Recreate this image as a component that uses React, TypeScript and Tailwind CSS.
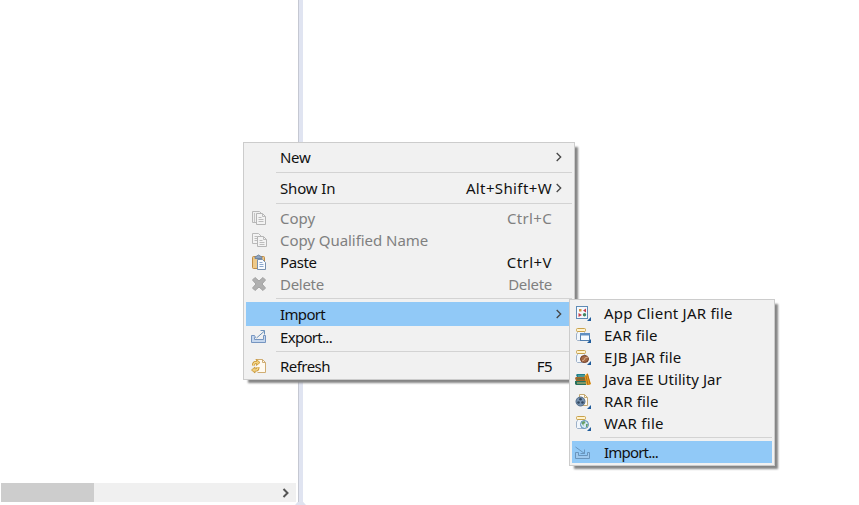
import type { ReactNode } from 'react';

function Svg({ children }: { children: ReactNode }) {
  return (
    <svg width="16" height="16" viewBox="0 0 16 16" fill="none">
      {children}
    </svg>
  );
}

const Corner = () => <path d="M16 12v4h-4z" fill="#1f5c9c" />;

const Jar = () => (
  <>
    <path d="M2.500 4.500v1L1.500 7v5.500l1 1h7l1-1V7l-1-1.500v-1z" fill="#f1f6fb" stroke="#9db1c9" />
    <rect x="1.500" y="1.500" width="9" height="3" rx="1" fill="#fff3cf" stroke="#c9a24c" />
  </>
);

const CopyIcon = () => (
  <Svg>
    <path d="M1.500 1.500h7l2 2v9h-9z" fill="#efefef" stroke="#b8b8b8" />
    <path d="M3.500 3v9" stroke="#c4c4c4" />
    <path d="M5.500 3.500h6l3 3v8h-9z" fill="#f3f3f3" stroke="#b5b5b5" />
    <path d="M11.500 3.500v3h3M7.500 7.500h3M7.500 9.500h5M7.500 11.500h5" stroke="#bcbcbc" />
  </Svg>
);

const CopyNameIcon = () => (
  <Svg>
    <path d="M1.500 1.500h6l3 3v7h-9z" fill="#f3f3f3" stroke="#b9b9b9" />
    <path d="M3.500 4.500h3M3.500 6.500h3M3.500 8.500h3" stroke="#bdbdbd" />
    <path d="M6.500 4.500h6l3 3v7h-9z" fill="#f3f3f3" stroke="#b5b5b5" />
    <path d="M12.500 4.500v3h3M8.500 8.500h3M8.500 10.500h5M8.500 12.500h5" stroke="#bcbcbc" />
  </Svg>
);

const PasteIcon = () => (
  <Svg>
    <rect x="1.500" y="2.500" width="12" height="12" rx="1" fill="#edc98a" stroke="#c18c43" />
    <path d="M4 4.500V3l2-1q1.500-2 3 0l2 1v1.500z" fill="#8fa4c0" stroke="#71869f" />
    <path d="M6.500 5.500h5l3 3v7h-8z" fill="#f8fbff" stroke="#7790ae" />
    <path d="M8.500 8.500h3M8.500 10.500h4M8.500 12.500h4" stroke="#8ca8ce" />
  </Svg>
);

const DeleteIcon = () => (
  <Svg>
    <path d="M4 1.500 8 5l4-3.500L14.500 4 11 8l3.500 4-2.500 2.500L8 11l-4 3.500L1.500 12 5 8 1.500 4z" fill="#b0b0b0" stroke="#a3a3a3" strokeLinejoin="round" />
  </Svg>
);

const ExportIcon = () => (
  <Svg>
    <path d="M3.500 6.500h-3v7h14v-7h-2v4h-9v-2h1z" fill="#c5d7ee" stroke="#7695c0" />
    <path d="M5.500 9l8-7M9.500 1.500h4v4" stroke="#6d91ba" />
  </Svg>
);

const ImportIcon = () => (
  <Svg>
    <path d="M3.500 8.500h-3v6h14v-6h-2v3h-9z" fill="#9fc9ee" stroke="#6995bd" />
    <path d="M.5 3l9 6.500M9.500 5.500v4h-4" stroke="#6995bd" />
  </Svg>
);

const RefreshIcon = () => (
  <Svg>
    <path d="M4.500 1.500h7l3 3v10h-8" fill="#fffaf0" stroke="#d0ad72" />
    <path d="M11.500 1.500v3h3" stroke="#d0ad72" />
    <path d="M6 4.500H4.500Q2.500 4.500 2.500 7.500M3 12h2q2 0 2-3" stroke="#c79331" strokeWidth="3" />
    <path d="M5.500 1.500v6l3.500-3zM4 9v6L.5 12z" fill="#f0cd79" stroke="#c79331" strokeWidth=".8" />
    <path d="M6 4.500H4.500Q2.500 4.500 2.500 7.500M3 12h2q2 0 2-3" stroke="#f5d98e" strokeWidth="1.300" />
  </Svg>
);

const AppClientIcon = () => (
  <Svg>
    <rect x="1.500" y="1.500" width="11" height="12" fill="#f5f9fd" stroke="#5f8bb5" />
    <path d="M4 4h2.500v2.500H4z" fill="#d49442" />
    <path d="M11 3.500v4l-3-2z" fill="#c63f4b" />
    <path d="M3.500 8l3.500 2-3.500 2z" fill="#c63f4b" />
    <circle cx="9.500" cy="9.800" r="1.700" fill="#438665" />
    <Corner />
  </Svg>
);

const EarIcon = () => (
  <Svg>
    <Jar />
    <rect x="5.500" y="6.500" width="9" height="7" fill="#f5faff" stroke="#527faf" />
    <path d="M5 6h10v2.500H5z" fill="#5f8fc2" />
    <Corner />
  </Svg>
);

const EjbIcon = () => (
  <Svg>
    <Jar />
    <ellipse cx="9.500" cy="10" rx="4" ry="3.500" fill="#a56a45" stroke="#713d27" />
    <path d="M7 12q2 0 2.500-2T13 8" stroke="#dfb698" />
    <Corner />
  </Svg>
);

const UtilityIcon = () => (
  <Svg>
    <path d="M1 4l1-1h8v3H2z" fill="#207e8a" />
    <path d="M3 5h7" stroke="#6bb6a6" />
    <path d="M0 7l1-1h10v4H1z" fill="#a9672b" />
    <path d="M2 8h8" stroke="#4d7840" />
    <path d="M0 10h11v4H1l-1-1z" fill="#26715d" />
    <path d="M2 12h9" stroke="#d9be72" />
    <path d="M9.500 5l3-3 3.500 11-1.500 1h-3z" fill="#e79e22" />
    <path d="M11 5l2 9M12.500 3l2.500 10" stroke="#b66d16" />
  </Svg>
);

const RarIcon = () => (
  <Svg>
    <path d="M4.500 1.500h5l3 3v8h-8z" fill="#fffaf0" stroke="#c5aa73" />
    <path d="M9.500 1.500v3h3" stroke="#c5aa73" />
    <circle cx="5.500" cy="8.500" r="4.500" fill="#7893b0" stroke="#506b8a" />
    <circle cx="5.500" cy="6.200" r="1.300" fill="#32475f" />
    <circle cx="3.500" cy="9.500" r="1.300" fill="#32475f" />
    <circle cx="7.500" cy="9.500" r="1.300" fill="#32475f" />
    <Corner />
  </Svg>
);

const WarIcon = () => (
  <Svg>
    <Jar />
    <circle cx="9.500" cy="9.500" r="4" fill="#d5e9f5" stroke="#568ab5" />
    <path d="M6.500 8q1-2 3-2l1 2-2 1v2zM11 9h2l-1 3h-1z" fill="#67a064" />
    <Corner />
  </Svg>
);

type ItemProps = {
  label: string;
  icon?: ReactNode;
  shortcut?: string;
  arrow?: boolean;
  className?: string;
  text?: string;
  keys?: string;
};

function Item({ label, icon, shortcut, arrow, className = 'h-[22px] pb-[2px]', text = '', keys = '' }: ItemProps) {
  return (
    <div className={`flex shrink-0 items-center pr-[7px] ${className}`}>
      <span className="flex w-[34px] shrink-0 pl-[5px] group-data-[sub=true]:w-[32px] group-data-[sub=true]:pl-[3px]">
        {icon}
      </span>
      <span className={`grow ${text}`}>{label}</span>
      <span className={keys}>{shortcut}</span>
      <span className="flex w-[13px] shrink-0 justify-end pr-[3px]">
        {arrow && (
          <svg width="6" height="10" viewBox="0 0 6 10" fill="none">
            <path d="M.7 1l4 4-4 4" stroke="#444" strokeWidth="1.300" />
          </svg>
        )}
      </span>
    </div>
  );
}

const menu =
  'group absolute flex flex-col border border-[#cccccc] bg-[#f1f1f1] px-[2px] text-[15px] leading-[22px] text-[#111] whitespace-nowrap shadow-[4px_4px_2px_-1px_#858585]';

const gray = 'h-[22px] pb-[2px] text-[#808080]';

export default function App() {
  return (
    <div className="relative flex h-[505px] w-[859px] overflow-hidden bg-white font-['Noto_Sans',sans-serif]">
      <div className="flex w-[298px] flex-col justify-end pb-[3px] pl-px">
        <div className="flex h-[19px] w-[295px] items-center justify-between bg-[#f0f0f0] pr-[6px]">
          <div className="h-full w-[93px] bg-[#cdcdcd]" />
          <svg width="8" height="10" viewBox="0 0 8 10" fill="none">
            <path d="M1.500 1l4 4-4 4" stroke="#555" strokeWidth="2" />
          </svg>
        </div>
      </div>
      <div className="flex w-[5px] flex-col">
        <div className="grow border-l border-[#c5c8d2] bg-[#e0e4f1]" />
        <div className="-ml-[3px] h-[3px] w-[11px] bg-[#dfe3f0] [clip-path:polygon(25%_0,75%_0,100%_100%,0_100%)]" />
      </div>
      <div className="grow bg-white" />

      <div className={`${menu} left-[243px] top-[142px] h-[238px] w-[332px]`}>
        <Item label="New" arrow className="h-[29px] pb-[2px]" text="tracking-[-0.3px]" />
        <div className="ml-[30px] h-px shrink-0 bg-[#d3d3d3]" />
        <Item label="Show In" shortcut="Alt+Shift+W" arrow className="h-[30px]" text="tracking-[-0.15px]" keys="tracking-[0.38px]" />
        <div className="mb-[4px] ml-[30px] h-px shrink-0 bg-[#d3d3d3]" />
        <Item label="Copy" icon={<CopyIcon />} shortcut="Ctrl+C" className={gray} keys="tracking-[0.35px]" />
        <Item label="Copy Qualified Name" icon={<CopyNameIcon />} className={gray} text="tracking-[-0.05px]" />
        <Item label="Paste" icon={<PasteIcon />} shortcut="Ctrl+V" text="tracking-[-0.4px]" keys="tracking-[0.45px]" />
        <Item label="Delete" icon={<DeleteIcon />} shortcut="Delete" className={gray} text="tracking-[-0.3px]" keys="tracking-[-0.3px]" />
        <div className="mb-[3px] ml-[30px] mt-[2px] h-px shrink-0 bg-[#d3d3d3]" />
        <Item label="Import" arrow className="h-[24px] bg-[#91c9f7]" text="tracking-[-0.65px]" />
        <Item label="Export..." icon={<ExportIcon />} className="h-[24px] pb-[2px]" text="tracking-[-0.7px]" />
        <div className="mb-[3px] ml-[30px] mt-px h-px shrink-0 bg-[#d3d3d3]" />
        <Item label="Refresh" icon={<RefreshIcon />} shortcut="F5" className="h-[24px] pb-[2px]" text="tracking-[-0.55px]" keys="tracking-[-0.5px]" />
      </div>

      <div data-sub="true" className={`${menu} left-[569px] top-[299px] h-[167px] w-[206px] pt-[3px]`}>
        <Item label="App Client JAR file" icon={<AppClientIcon />} text="tracking-[0.22px]" />
        <Item label="EAR file" icon={<EarIcon />} text="tracking-[0.15px]" />
        <Item label="EJB JAR file" icon={<EjbIcon />} text="tracking-[0.18px]" />
        <Item label="Java EE Utility Jar" icon={<UtilityIcon />} text="tracking-[0.06px]" />
        <Item label="RAR file" icon={<RarIcon />} text="tracking-[0.15px]" />
        <Item label="WAR file" icon={<WarIcon />} text="tracking-[0.28px]" />
        <div className="mb-[3px] ml-[28px] mt-[2px] h-px shrink-0 bg-[#d3d3d3]" />
        <Item label="Import..." icon={<ImportIcon />} className="h-[22px] bg-[#91c9f7]" text="tracking-[-0.8px]" />
      </div>
    </div>
  );
}
